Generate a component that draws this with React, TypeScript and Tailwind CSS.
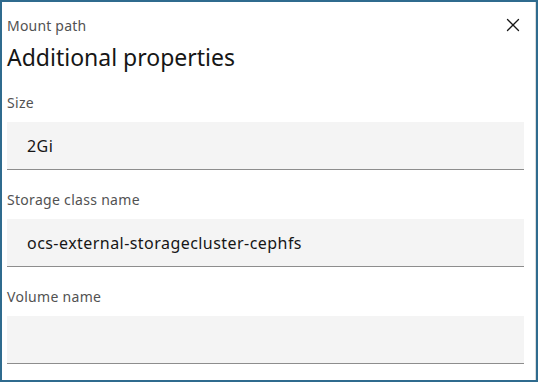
import { X } from "lucide-react"

function Field({ label, value }: { label: string; value: string }) {
  return (
    <div className="flex flex-col">
      <label className="h-[20px] flex items-center text-[14px] text-[#525252] tracking-[0.3px]">{label}</label>
      <div className="mt-[10px] h-[48px] bg-[#f4f4f4] border-b border-[#8d8d8d] pl-[20px] flex items-center text-[16px] text-[#161616] tracking-[0.45px]">
        {value}
      </div>
    </div>
  )
}

export default function App() {
  return (
    <div
      className="w-[538px] h-[382px] border-2 border-[#2f6b8e] bg-white overflow-hidden"
      style={{ fontFamily: '"Noto Sans", "Open Sans", sans-serif' }}
    >
      <div className="h-full border-r border-[#dcdcdc] pl-[5px] pr-[11px]">
        <div className="relative pt-[13px]">
          <div className="h-[20px] flex items-center text-[14px] text-[#525252] tracking-[0.2px]">Mount path</div>
          <h2 className="mt-[2px] h-[40px] flex items-center text-[23px] text-[#161616] font-normal">
            Additional properties
          </h2>
          <button className="absolute right-[0px] top-[12px] text-[#161616]">
            <X size={22} strokeWidth={1.4} />
          </button>
        </div>
        <div className="mt-[15px] flex flex-col gap-[19px]">
          <Field label="Size" value="2Gi" />
          <Field label="Storage class name" value="ocs-external-storagecluster-cephfs" />
          <Field label="Volume name" value="" />
        </div>
      </div>
    </div>
  )
}
